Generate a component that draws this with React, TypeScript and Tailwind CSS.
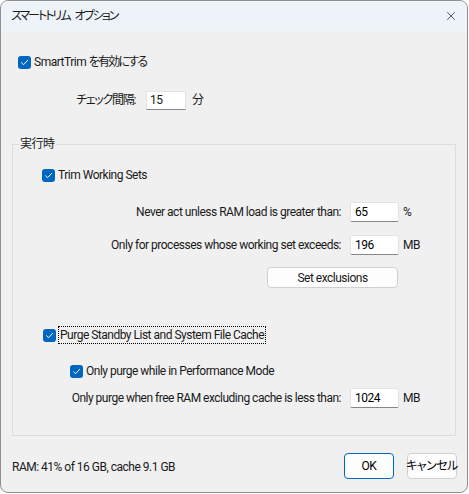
import { X } from 'lucide-react';

const Check = ({ className = '' }: { className?: string }) => (
  <span className={`flex h-[13px] w-[13px] shrink-0 items-center justify-center rounded-[3px] bg-[#0067c0] ${className}`}>
    <svg width="9" height="9" viewBox="0 0 9 9" fill="none">
      <path d="M1.6 4.8 L3.6 6.7 L7.6 2.4" stroke="white" strokeWidth="1" strokeLinecap="round" strokeLinejoin="round" />
    </svg>
  </span>
);

const Field = ({ value }: { value: string }) => (
  <div className="ml-[9px] flex h-[20px] w-[49px] items-center rounded-[2px] border border-[#e3e3e3] border-b-[#868686] bg-white pl-[4px] text-black">
    {value}
  </div>
);

const Row = ({ label, value, unit, className = '' }: { label: string; value: string; unit: string; className?: string }) => (
  <div className={`flex h-[20px] items-center justify-end ${className}`}>
    <span>{label}</span>
    <Field value={value} />
    <span className="ml-[4px] w-[52px]">{unit}</span>
  </div>
);

export default function App() {
  return (
    <div className="h-[494px] w-[469px] bg-white text-[12px] leading-[16px] tracking-[-0.5px] text-[#1a1a1a] [font-family:Roboto,'Noto_Sans_CJK_JP',sans-serif] [font-feature-settings:'palt']">
      <div className="flex h-[493px] w-[468px] flex-col overflow-hidden rounded-[8px] border border-[#8f8f8f] bg-[#f0f0f0]">
        {/* title bar */}
        <div className="flex h-[30px] shrink-0 items-center justify-between bg-[#eef3f9] pl-[10px] pr-[9px]">
          <span className="flex tracking-[-2px]">
            <span>スマートトリム</span>
            <span className="ml-[5px]">オプション</span>
          </span>
          <X className="h-[14px] w-[14px] text-black" strokeWidth={1.1} />
        </div>

        {/* enable */}
        <div className="mt-[21px] flex h-[20px] items-center gap-[3px] pl-[17px]">
          <Check />
          <span>
            SmartTrim <span className="tracking-[-1.8px]">を有効にする</span>
          </span>
        </div>

        <div className="mt-[18px] flex h-[20px] items-center">
          <span className="w-[134px] text-right tracking-[-1.3px]">チェック間隔:</span>
          <div className="ml-[11px] flex h-[19px] w-[40px] items-center border border-[#e3e3e3] border-b-[#868686] bg-white pl-[3px]">15</div>
          <span className="ml-[6px]">分</span>
        </div>

        {/* group */}
        <fieldset className="mx-[11px] mt-[26px] border border-[#dcdcdc] p-0 pb-[27px]">
          <legend className="ml-[6px] px-[1px] leading-[16px]">実行時</legend>

          <div className="mt-[13px] flex h-[20px] items-center gap-[3px] pl-[29px]">
            <Check />
            <span>Trim Working Sets</span>
          </div>

          <Row className="mt-[17px]" label="Never act unless RAM load is greater than:" value="65" unit="%" />
          <Row className="mt-[13px]" label="Only for processes whose working set exceeds:" value="196" unit="MB" />

          <div className="mt-[12px] flex justify-end pr-[57px]">
            <button className="flex h-[21px] w-[131px] items-center justify-center rounded-[4px] border border-[#d0d0d0] bg-[#fdfdfd]">
              Set exclusions
            </button>
          </div>

          <div className="mt-[37px] flex h-[20px] items-center gap-[2px] pl-[30px]">
            <Check />
            <span className="border border-dotted border-black px-[1px] leading-[16px]">Purge Standby List and System File Cache</span>
          </div>

          <div className="mt-[16px] flex h-[20px] items-center gap-[3px] pl-[57px]">
            <Check />
            <span>Only purge while in Performance Mode</span>
          </div>

          <Row className="mt-[7px]" label="Only purge when free RAM excluding cache is less than:" value="1024" unit="MB" />
        </fieldset>

        {/* footer */}
        <div className="mt-[17px] flex items-center pl-[11px] pr-[10px]">
          <span className="flex-1 pt-[1px]">RAM: 41% of 16 GB, cache 9.1 GB</span>
          <button className="flex h-[26px] w-[50px] items-center justify-center rounded-[4px] border border-[#0067c0] bg-[#fdfdfd] text-black">
            OK
          </button>
          <button className="ml-[13px] flex h-[26px] w-[50px] items-center justify-center whitespace-nowrap rounded-[4px] border border-[#d0d0d0] bg-[#fdfdfd] text-black tracking-[-0.5px]">
            キャンセル
          </button>
        </div>
      </div>
    </div>
  );
}
